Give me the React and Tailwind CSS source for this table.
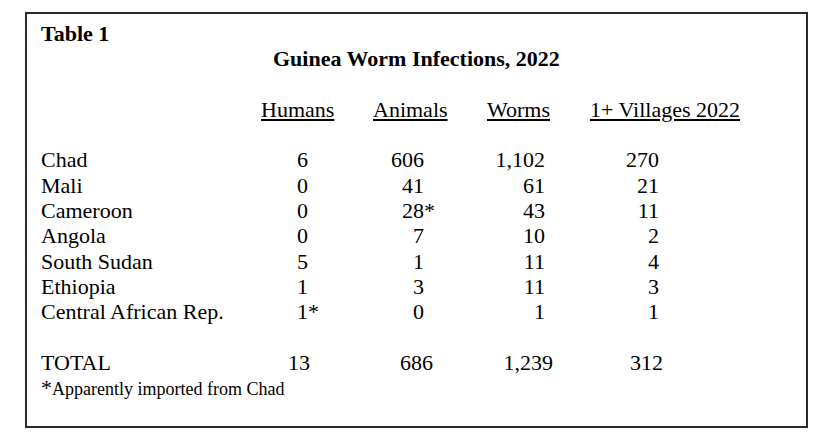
const rows = [
  ["Chad", "6", "606", "1,102", "270"],
  ["Mali", "0", "41", "61", "21"],
  ["Cameroon", "0", "28*", "43", "11"],
  ["Angola", "0", "7", "10", "2"],
  ["South Sudan", "5", "1", "11", "4"],
  ["Ethiopia", "1", "3", "11", "3"],
  ["Central African Rep.", "1*", "0", "1", "1"],
];

// a trailing * hangs past the column edge, like in the printed table
function Num({ value }) {
  if (value.endsWith("*")) {
    return (
      <>
        {value.slice(0, -1)}
        <span className="inline-block w-0 text-left">*</span>
      </>
    );
  }
  return value;
}

function Row({ cells, total }) {
  const [label, humans, animals, worms, villages] = cells;
  return (
    <div className="flex">
      <div className="w-[227px]">{label}</div>
      <div className={total ? "w-[42px] text-right" : "w-[40px] text-right"}>
        <Num value={humans} />
      </div>
      <div className={total ? "w-[123px] text-right" : "w-[116px] text-right"}>
        <Num value={animals} />
      </div>
      <div className={total ? "w-[120px] text-right" : "w-[121px] text-right"}>
        <Num value={worms} />
      </div>
      <div className={total ? "w-[110px] text-right" : "w-[114px] text-right"}>
        <Num value={villages} />
      </div>
    </div>
  );
}

export default function App() {
  return (
    <div className="w-[832px] h-[445px] bg-white overflow-hidden">
      <div
        className="ml-[25px] mt-[12px] w-[783px] h-[416px] border-2 border-[#2a2a2a] pl-[14px] pt-[7px] text-[22px] leading-[25.3px] text-black"
        style={{ fontFamily: '"Liberation Serif", "Times New Roman", serif' }}
      >
        <div className="font-bold">Table 1</div>
        <div className="font-bold pl-[232px]">Guinea Worm Infections, 2022</div>
        <div className="h-[25.3px]" />

        <div className="flex pl-[220px]">
          <div className="w-[112px]">
            <span className="underline">Humans</span>
          </div>
          <div className="w-[114px]">
            <span className="underline">Animals</span>
          </div>
          <div className="w-[103px]">
            <span className="underline">Worms</span>
          </div>
          <div>
            <span className="underline">1+ Villages 2022</span>
          </div>
        </div>
        <div className="h-[25.3px]" />

        {rows.map((r) => (
          <Row key={r[0]} cells={r} />
        ))}
        <div className="h-[25.3px]" />

        <Row cells={["TOTAL", "13", "686", "1,239", "312"]} total />
        <div>
          <span>*</span>
          <span className="text-[18px]">Apparently imported from Chad</span>
        </div>
      </div>
    </div>
  );
}
